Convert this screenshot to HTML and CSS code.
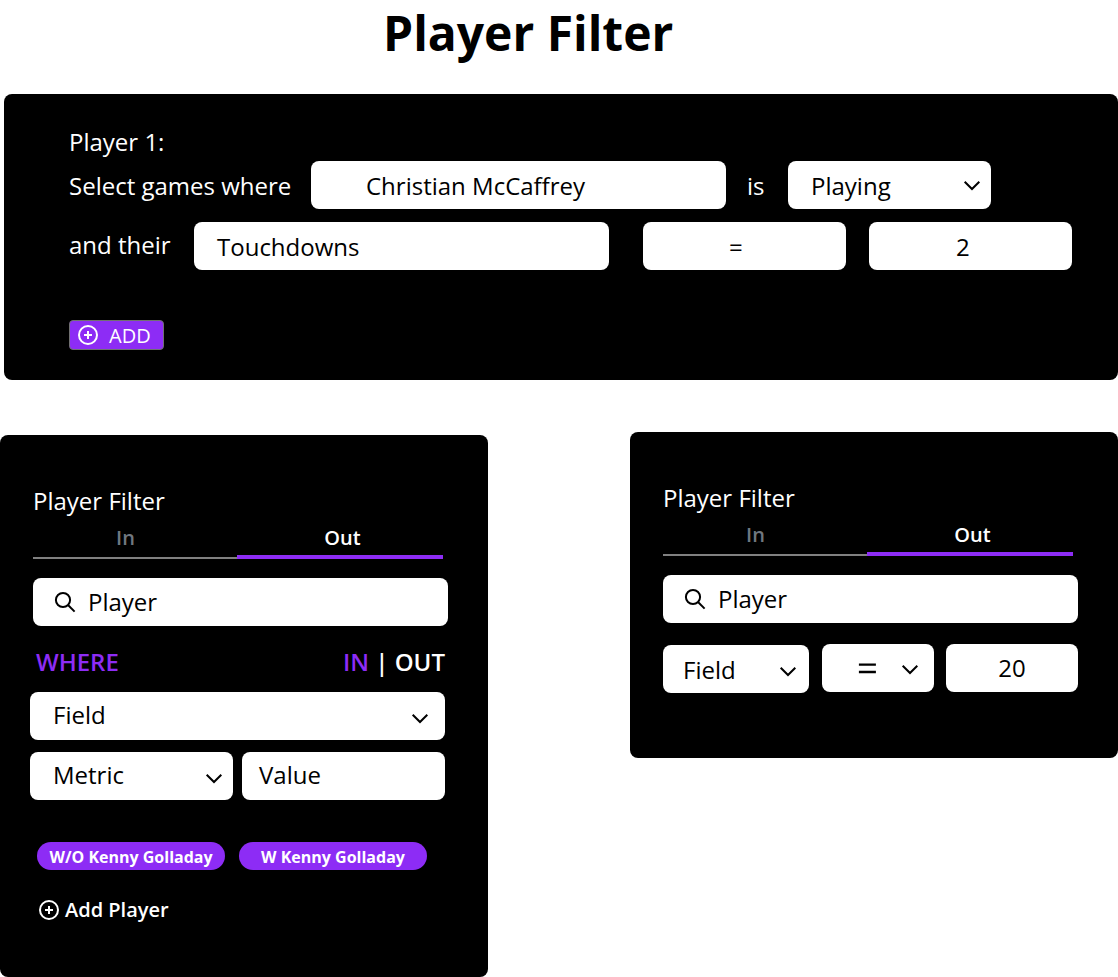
FILE: index.html
```html
<!DOCTYPE html>
<html lang="en">
<head>
<meta charset="utf-8">
<title>Player Filter</title>
<link rel="stylesheet" href="styles.css">
</head>
<body>
<svg class="defs" width="0" height="0">
  <symbol id="chevron" viewBox="0 0 18 12"><path d="M1.7 1.7l7.3 7.3 7.3-7.3"/></symbol>
  <symbol id="search" viewBox="0 0 22 22"><circle cx="9" cy="9" r="7.1"/><path d="M14 14l6.6 6.6"/></symbol>
  <symbol id="plus" viewBox="0 0 20 20"><circle cx="10" cy="10" r="9"/><path d="M10 6v8M6 10h8"/></symbol>
  <symbol id="equals" viewBox="0 0 18 12"><path d="M.9 1.6h17M.9 9h17"/></symbol>
</svg>
<h1 class="title">Player Filter</h1>
<section class="panel builder">
  <p class="label first">Player 1:</p>
  <div class="row">
    <span class="label where">Select games where</span>
    <div class="field wide name">Christian McCaffrey</div>
    <span class="label is">is</span>
    <div class="field half">Playing<svg class="chevron"><use href="#chevron"/></svg></div>
  </div>
  <div class="row stats">
    <span class="label their">and their</span>
    <div class="field wide">Touchdowns</div>
    <div class="field half operator">=</div>
    <div class="field half amount">2</div>
  </div>
  <button class="add"><svg class="plus"><use href="#plus"/></svg><span class="add-text">ADD</span></button>
</section>
<main class="cards">
  <section class="panel card tall">
    <h2 class="heading">Player Filter</h2>
    <div class="tabs"><span class="tab">In</span><span class="tab active">Out</span></div>
    <div class="field wide search"><svg class="glass"><use href="#search"/></svg>Player</div>
    <div class="criteria">
      <div class="caption"><span class="accent">WHERE</span><span><span class="accent">IN</span> | OUT</span></div>
      <div class="field wide high">Field<svg class="chevron"><use href="#chevron"/></svg></div>
      <div class="pair">
        <div class="field half high metric">Metric<svg class="chevron"><use href="#chevron"/></svg></div>
        <div class="field half high value">Value</div>
      </div>
    </div>
    <div class="pills"><span class="pill">W/O Kenny Golladay</span><span class="pill">W Kenny Golladay</span></div>
    <div class="add-player"><svg class="plus"><use href="#plus"/></svg>Add Player</div>
  </section>
  <section class="panel card short">
    <h2 class="heading">Player Filter</h2>
    <div class="tabs"><span class="tab">In</span><span class="tab active">Out</span></div>
    <div class="field wide search"><svg class="glass"><use href="#search"/></svg>Player</div>
    <div class="compare">
      <div class="field pick">Field<svg class="chevron"><use href="#chevron"/></svg></div>
      <div class="field compare-op"><svg class="equals"><use href="#equals"/></svg><svg class="chevron"><use href="#chevron"/></svg></div>
      <div class="field number">20</div>
    </div>
  </section>
</main>
</body>
</html>
```
FILE: styles.css
```css
* { box-sizing: border-box; }
body {
  margin: 0;
  height: 977px;
  overflow: hidden;
  background: #fff;
  color: #000;
  font: 24px/32px "Open Sans", sans-serif;
}
h1, h2, p { margin: 0; }
.defs { display: block; }
svg { fill: none; stroke: currentColor; stroke-width: 2; flex: none; }
.title {
  height: 94px;
  padding-left: 383px;
  font-size: 48px;
  line-height: 66px;
  font-weight: 700;
}
.panel { background: #000; color: #fff; border-radius: 8px; }
.builder { margin-left: 4px; height: 286px; padding: 32px 0 0 65px; }
.row { display: flex; align-items: center; height: 48px; }
.first { margin-bottom: 3px; }
.stats { margin-top: 13px; }
.label { white-space: nowrap; }
.where { width: 242px; padding-top: 2px; }
.is { width: 62px; padding: 2px 0 0 21px; }
.their { width: 125px; padding-bottom: 2px; }
.field {
  display: flex;
  align-items: center;
  flex: none;
  height: 48px;
  padding: 2px 0 0 23px;
  border-radius: 8px;
  background: #fff;
  color: #000;
}
.wide { width: 415px; }
.half { width: 203px; }
.name { padding-left: 55px; }
.high { padding: 0 0 2px 23px; }
.operator { margin-left: 34px; padding-left: 86px; }
.amount { margin-left: 23px; padding-left: 87px; }
.chevron { width: 18px; height: 12px; margin: 0 10px 0 auto; }
.builder .chevron { margin-bottom: 1px; }
.high .chevron { margin: 7px 16px 0 auto; }
.metric .chevron { margin-right: 10px; }
.add {
  display: flex;
  align-items: center;
  width: 95px;
  height: 30px;
  margin: 50px 0 0;
  padding: 0 0 0 8px;
  border: 1px solid #707070;
  border-radius: 4px;
  background: #8d2cf5;
  color: #fff;
  font: 20px/28px "Open Sans", sans-serif;
}
.plus { width: 20px; height: 20px; }
.add .plus { margin-right: 11px; }
.add-text { line-height: 26px; padding-top: 2px; }
.cards { display: flex; justify-content: space-between; align-items: flex-start; margin-top: 52px; }
.card { width: 488px; padding: 50px 0 0 33px; }
.tall { height: 542px; margin-top: 3px; }
.short { height: 326px; }
.heading { font-size: 24px; font-weight: 400; line-height: 32px; }
.tabs { display: flex; align-items: flex-end; width: 410px; margin: 6px 0 19px; }
.tab {
  width: 204px;
  height: 34px;
  padding-right: 19px;
  border-bottom: 2px solid #808080;
  color: #707780;
  font-size: 20px;
  font-weight: 600;
  line-height: 26px;
  text-align: center;
}
.tab.active { width: 206px; height: 36px; padding: 2px 0 0 5px; border-bottom: 4px solid #8d2cf5; color: #fff; }
.search { padding: 0 0 0 21px; }
.glass { width: 22px; height: 22px; margin-right: 12px; }
.criteria { width: 415px; margin: 20px 0 0 -3px; }
.caption { display: flex; justify-content: space-between; height: 46px; padding: 0 0 0 6px; font-weight: 600; }
.accent { color: #8d2cf5; }
.pair { display: flex; gap: 9px; margin-top: 12px; }
.value { padding-left: 17px; }
.pills { display: flex; gap: 14px; margin: 42px 0 0 4px; }
.pill {
  width: 188px;
  height: 28px;
  padding-top: 1px;
  border-radius: 14px;
  background: #8d2cf5;
  font-size: 16px;
  font-weight: 700;
  line-height: 28px;
  text-align: center;
}
.add-player {
  display: flex;
  align-items: center;
  gap: 6px;
  height: 28px;
  margin: 26px 0 0 6px;
  font-size: 20px;
  font-weight: 600;
  line-height: 28px;
}
.compare { display: flex; margin-top: 21px; }
.pick { width: 146px; margin: 1px 13px 0 0; padding-left: 20px; }
.pick .chevron { margin: 3px 12px 0 auto; }
.compare-op { width: 112px; margin-right: 12px; padding-left: 36px; }
.compare-op .chevron { margin: 1px 15px 0 auto; }
.equals { width: 18px; height: 12px; stroke-width: 2.4; }
.number { width: 132px; padding: 0; justify-content: center; }
```
